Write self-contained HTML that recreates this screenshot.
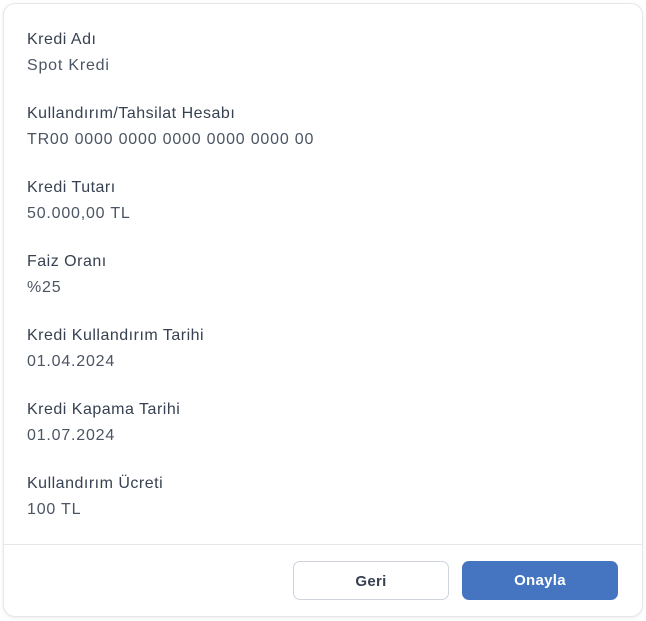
<!DOCTYPE html>
<html><head><meta charset="utf-8"><style>
html,body{margin:0;padding:0;background:#fff;width:646px;height:621px;overflow:hidden}
.card{position:absolute;left:3px;top:3px;width:638px;height:612px;border:1px solid #e5e7eb;border-radius:12px;box-shadow:0 1px 3px rgba(0,0,0,.08);background:#fff;font-family:"Liberation Sans",sans-serif}
.g{position:absolute;left:23px}
.l{font-size:16px;color:#374151;line-height:20px;letter-spacing:0.5px}
.v{font-size:16px;color:#4b5563;line-height:20px;margin-top:6px;letter-spacing:0.8px}
.div{position:absolute;left:0;right:0;top:540px;border-top:1px solid #e5e7eb}
.btn{position:absolute;top:557px;width:156px;height:39px;border-radius:7px;box-sizing:border-box;font-size:15px;font-weight:bold;text-align:center;line-height:39px;letter-spacing:0.3px}
.geri{left:289px;border:1px solid #cfd4dc;color:#374151;background:#fff}
.ok{left:458px;background:#4575c0;color:#fff}
</style></head><body><div class="card">
<div class="g" style="top:26px"><div class="l">Kredi Adı</div><div class="v">Spot Kredi</div></div>
<div class="g" style="top:100px"><div class="l">Kullandırım/Tahsilat Hesabı</div><div class="v">TR00 0000 0000 0000 0000 0000 00</div></div>
<div class="g" style="top:174px"><div class="l">Kredi Tutarı</div><div class="v">50.000,00 TL</div></div>
<div class="g" style="top:248px"><div class="l">Faiz Oranı</div><div class="v">%25</div></div>
<div class="g" style="top:322px"><div class="l">Kredi Kullandırım Tarihi</div><div class="v">01.04.2024</div></div>
<div class="g" style="top:396px"><div class="l">Kredi Kapama Tarihi</div><div class="v">01.07.2024</div></div>
<div class="g" style="top:470px"><div class="l">Kullandırım Ücreti</div><div class="v">100 TL</div></div>
<div class="div"></div>
<div class="btn geri">Geri</div>
<div class="btn ok">Onayla</div>
</div></body></html>
